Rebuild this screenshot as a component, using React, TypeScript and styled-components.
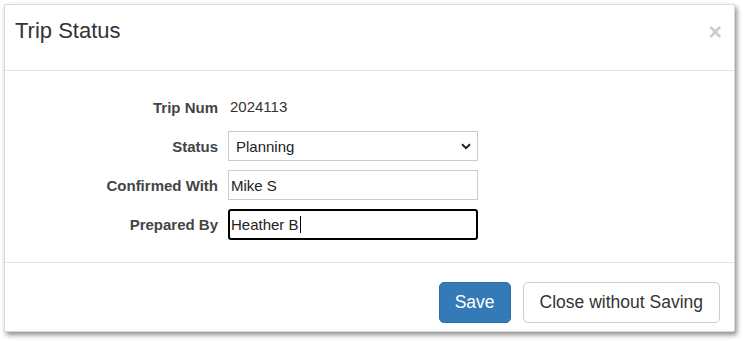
import styled, { createGlobalStyle } from 'styled-components';

const GlobalStyle = createGlobalStyle`
    html, body {
        margin: 0;
        padding: 0;
        background: #fff;
        font-family: "Liberation Sans", Arial, sans-serif;
        color: #333;
    }
`;

const Page = styled.div`
    padding: 4px 10px 9px 4px;
`;

const Modal = styled.div`
    width: 731px;
    background: #fff;
    border: 1px solid rgba(0, 0, 0, .15);
    border-radius: 2px;
    box-shadow: 2px 3px 5px rgba(0, 0, 0, .45);
    box-sizing: border-box;
`;

const Header = styled.div`
    display: flex;
    align-items: flex-start;
    justify-content: space-between;
    height: 66px;
    padding: 10px 12px 0 10px;
    border-bottom: 1px solid #e5e5e5;
    box-sizing: border-box;
`;

const Title = styled.h4`
    margin: 0;
    font-size: 22px;
    font-weight: normal;
    line-height: 31px;
    color: #333;
`;

const Close = styled.button`
    border: 0;
    background: none;
    padding: 0;
    margin-top: 6px;
    font-family: "Liberation Sans", Arial, sans-serif;
    font-size: 23px;
    font-weight: bold;
    line-height: 1;
    color: #000;
    opacity: .2;
    cursor: pointer;
`;

const Body = styled.div`
    padding: 21px 15px 22px 15px;
    border-bottom: 1px solid #e5e5e5;
`;

const Form = styled.div`
    display: grid;
    grid-template-columns: 198px 250px;
    column-gap: 10px;
    row-gap: 9px;
    align-items: center;
`;

const Label = styled.label`
    text-align: right;
    font-size: 15px;
    font-weight: bold;
    color: #444;
`;

const StaticValue = styled.div`
    height: 30px;
    line-height: 30px;
    padding-left: 2px;
    font-size: 15px;
    color: #333;
`;

const SelectWrap = styled.div`
    position: relative;
`;

const Select = styled.select`
    appearance: none;
    width: 250px;
    height: 30px;
    padding: 0 30px 0 7px;
    border: 1px solid #ccc;
    border-radius: 0;
    background: #fff;
    font-family: "Liberation Sans", Arial, sans-serif;
    font-size: 15px;
    color: #222;
    box-sizing: border-box;
`;

const Chevron = styled.svg`
    position: absolute;
    right: 7px;
    top: 12px;
    pointer-events: none;
`;

const Field = styled.div<{ $focused?: boolean }>`
    display: flex;
    align-items: center;
    width: 250px;
    height: ${p => (p.$focused ? '31px' : '30px')};
    padding: 0 ${p => (p.$focused ? '1px' : '2px')};
    border: ${p => (p.$focused ? '2px solid #000' : '1px solid #ccc')};
    border-radius: ${p => (p.$focused ? '3px' : '0')};
    background: #fff;
    font-size: 15px;
    color: #222;
    box-sizing: border-box;
`;

const Caret = styled.span`
    display: inline-block;
    width: 1px;
    height: 17px;
    margin-left: 1px;
    background: #000;
`;

const Footer = styled.div`
    display: flex;
    justify-content: flex-end;
    gap: 12px;
    padding: 19px 14px 8px;
`;

const Button = styled.button<{ $primary?: boolean }>`
    height: 41px;
    padding: 0 16px;
    border: 1px solid ${p => (p.$primary ? '#2e6da4' : '#ccc')};
    border-radius: 5px;
    background: ${p => (p.$primary ? '#337ab7' : '#fff')};
    color: ${p => (p.$primary ? '#fff' : '#333')};
    font-family: "Liberation Sans", Arial, sans-serif;
    font-size: 17.5px;
    cursor: pointer;
`;

const SaveButton = styled(Button)`
    padding: 0 15px;
`;

function App() {
    return <Page>
        <GlobalStyle />
        <Modal>
            <Header>
                <Title>Trip Status</Title>
                <Close>×</Close>
            </Header>
            <Body>
                <Form>
                    <Label>Trip Num</Label>
                    <StaticValue>2024113</StaticValue>

                    <Label>Status</Label>
                    <SelectWrap>
                        <Select defaultValue="Planning">
                            <option>Planning</option>
                            <option>Confirmed</option>
                            <option>Completed</option>
                        </Select>
                        <Chevron width="10" height="7" viewBox="0 0 10 7">
                            <path d="M1 1.2 L5 5.2 L9 1.2" fill="none" stroke="#222" strokeWidth="2" />
                        </Chevron>
                    </SelectWrap>

                    <Label>Confirmed With</Label>
                    <Field>Mike S</Field>

                    <Label>Prepared By</Label>
                    <Field $focused>Heather B<Caret /></Field>
                </Form>
            </Body>
            <Footer>
                <SaveButton $primary>Save</SaveButton>
                <Button>Close without Saving</Button>
            </Footer>
        </Modal>
    </Page>
}

export default App;
